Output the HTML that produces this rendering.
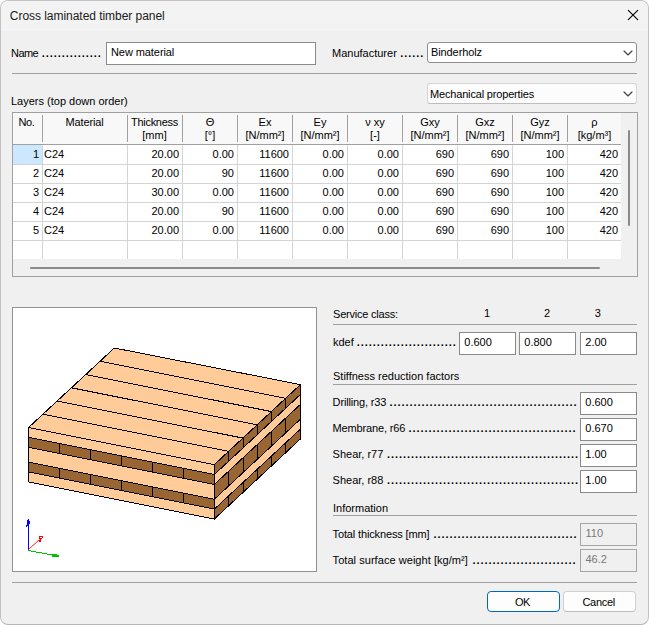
<!DOCTYPE html>
<html lang="en"><head><meta charset="utf-8"><title>Cross laminated timber panel</title>
<style>
html,body{margin:0;padding:0;background:#fff}
body{width:649px;height:625px;position:relative;overflow:hidden;font-family:"Liberation Sans",sans-serif;font-size:11px;color:#000}
.win{position:absolute;left:0;top:0;width:647px;height:623px;border:1px solid #c2c2c2;border-bottom-color:#b6b6b6;border-radius:8px;background:#f0f0f0;overflow:hidden}
.tb{position:absolute;left:0;top:0;width:647px;height:30px;background:#f3f3f3}
.t{position:absolute;white-space:nowrap;line-height:13px;height:13px}
.d{font-weight:bold}
.hl{position:absolute;height:1px}
.inp{position:absolute;border:1px solid #8a8a8a;background:#fff}
.dis{position:absolute;border:1px solid #a6a6a6;background:#f0f0f0}
.cb{position:absolute;border:1px solid #8f8f8f;border-radius:3px;background:#fff}
.cb2{position:absolute;border:1px solid #d6d6d6;border-bottom-color:#bdbdbd;border-radius:3px;background:#fcfcfc}
.btn{position:absolute;border:1px solid #d0d0d0;border-bottom-color:#bcbcbc;border-radius:4px;background:#fdfdfd}
.btn.def{border-color:#0067c0}
.grid{position:absolute;left:12px;top:112px;width:624px;height:163px;border:1px solid #a0a0a0;background:#f0f0f0}
.gw{position:absolute;left:0;top:0;width:608px;height:146px;background:#fff}
.vl{position:absolute;width:1px}
svg{position:absolute;left:0;top:0}
</style></head><body>
<div class="win">
<div class="tb"></div>

<div style="position:absolute;left:-1px;top:-1px;width:649px;height:625px">
<div class="t " style="font-size:12px;left:9.8px;top:10px;letter-spacing:-0.04px;color:#202020">Cross laminated timber panel</div>
<svg width="649" height="32" viewBox="0 0 649 32"><path d="M628.3 10.3 L637.7 19.7 M637.7 10.3 L628.3 19.7" stroke="#000" stroke-width="1.1" fill="none" stroke-linecap="round"/></svg>
<div class="t " style="left:11px;top:47px;letter-spacing:-0.55px">Name</div>
<div class="t d" style="left:41.7px;top:47px;letter-spacing:0.944px">...............</div>
<div class="inp" style="left:106px;top:42px;width:208px;height:21px"></div>
<div class="t " style="left:111px;top:46px;letter-spacing:-0.08px">New material</div>
<div class="t " style="left:332px;top:47px">Manufacturer</div>
<div class="t d" style="left:400.2px;top:47px;letter-spacing:0.944px">......</div>
<div class="cb" style="left:427px;top:42px;width:208px;height:19px"></div>
<div class="t " style="left:431px;top:46px;letter-spacing:-0.1px">Binderholz</div>
<div class="hl" style="left:12px;top:73px;width:625px;background:#a0a0a0"></div>
<div class="t " style="left:11px;top:95px">Layers (top down order)</div>
<div class="cb2" style="left:427px;top:83px;width:208px;height:19px"></div>
<div class="t " style="left:430px;top:88px;letter-spacing:-0.17px">Mechanical properties</div>
<svg width="649" height="120" viewBox="0 0 649 120"><path d="M624 51 L628 55 L632 51" stroke="#3c3c3c" stroke-width="1.15" fill="none" stroke-linecap="round"/><path d="M624 92 L628 96 L632 92" stroke="#3c3c3c" stroke-width="1.15" fill="none" stroke-linecap="round"/></svg>
<div class="grid">
<div class="gw"></div>
</div>
<div style="position:absolute;left:13px;top:113px;width:608px;height:31px;background:#f8f8f8"></div>
<div class="vl" style="left:42px;top:115px;height:27px;background:#a0a0a0"></div>
<div class="vl" style="left:42px;top:145px;height:114px;background:#d4d4d4"></div>
<div class="vl" style="left:127px;top:115px;height:27px;background:#a0a0a0"></div>
<div class="vl" style="left:127px;top:145px;height:114px;background:#d4d4d4"></div>
<div class="vl" style="left:182px;top:115px;height:27px;background:#a0a0a0"></div>
<div class="vl" style="left:182px;top:145px;height:114px;background:#d4d4d4"></div>
<div class="vl" style="left:237px;top:115px;height:27px;background:#a0a0a0"></div>
<div class="vl" style="left:237px;top:145px;height:114px;background:#d4d4d4"></div>
<div class="vl" style="left:292px;top:115px;height:27px;background:#a0a0a0"></div>
<div class="vl" style="left:292px;top:145px;height:114px;background:#d4d4d4"></div>
<div class="vl" style="left:347px;top:115px;height:27px;background:#a0a0a0"></div>
<div class="vl" style="left:347px;top:145px;height:114px;background:#d4d4d4"></div>
<div class="vl" style="left:402px;top:115px;height:27px;background:#a0a0a0"></div>
<div class="vl" style="left:402px;top:145px;height:114px;background:#d4d4d4"></div>
<div class="vl" style="left:457px;top:115px;height:27px;background:#a0a0a0"></div>
<div class="vl" style="left:457px;top:145px;height:114px;background:#d4d4d4"></div>
<div class="vl" style="left:512px;top:115px;height:27px;background:#a0a0a0"></div>
<div class="vl" style="left:512px;top:145px;height:114px;background:#d4d4d4"></div>
<div class="vl" style="left:567px;top:115px;height:27px;background:#a0a0a0"></div>
<div class="vl" style="left:567px;top:145px;height:114px;background:#d4d4d4"></div>
<div class="hl" style="left:13px;top:144px;width:608px;background:#a0a0a0"></div>
<div class="hl" style="left:13px;top:164px;width:608px;background:#d4d4d4"></div>
<div class="hl" style="left:13px;top:183px;width:608px;background:#d4d4d4"></div>
<div class="hl" style="left:13px;top:202px;width:608px;background:#d4d4d4"></div>
<div class="hl" style="left:13px;top:221px;width:608px;background:#d4d4d4"></div>
<div class="hl" style="left:13px;top:240px;width:608px;background:#d4d4d4"></div>
<div style="position:absolute;left:13px;top:145px;width:29px;height:19px;background:#cce8ff"></div>
<div class="t " style="left:-73.5px;width:200px;text-align:center;top:116px;letter-spacing:-0.3px">No.</div>
<div class="t " style="left:-15.5px;width:200px;text-align:center;top:116px;letter-spacing:-0.12px">Material</div>
<div class="t " style="left:54.5px;width:200px;text-align:center;top:116px;letter-spacing:-0.3px">Thickness</div>
<div class="t " style="left:54.5px;width:200px;text-align:center;top:129px">[mm]</div>
<div class="t " style="left:110px;width:200px;text-align:center;top:116px">Θ</div>
<div class="t " style="left:110px;width:200px;text-align:center;top:129px">[°]</div>
<div class="t " style="left:165px;width:200px;text-align:center;top:116px">Ex</div>
<div class="t " style="left:165px;width:200px;text-align:center;top:129px">[N/mm²]</div>
<div class="t " style="left:220px;width:200px;text-align:center;top:116px">Ey</div>
<div class="t " style="left:220px;width:200px;text-align:center;top:129px">[N/mm²]</div>
<div class="t " style="left:275px;width:200px;text-align:center;top:116px">ν xy</div>
<div class="t " style="left:275px;width:200px;text-align:center;top:129px">[-]</div>
<div class="t " style="left:330px;width:200px;text-align:center;top:116px">Gxy</div>
<div class="t " style="left:330px;width:200px;text-align:center;top:129px">[N/mm²]</div>
<div class="t " style="left:385px;width:200px;text-align:center;top:116px">Gxz</div>
<div class="t " style="left:385px;width:200px;text-align:center;top:129px">[N/mm²]</div>
<div class="t " style="left:440px;width:200px;text-align:center;top:116px">Gyz</div>
<div class="t " style="left:440px;width:200px;text-align:center;top:129px">[N/mm²]</div>
<div class="t " style="left:494.5px;width:200px;text-align:center;top:116px">ρ</div>
<div class="t " style="left:494.5px;width:200px;text-align:center;top:129px">[kg/m³]</div>
<div class="t " style="right:610px;text-align:right;top:148px">1</div>
<div class="t " style="left:44px;top:148px">C24</div>
<div class="t " style="right:470px;text-align:right;top:148px">20.00</div>
<div class="t " style="right:415px;text-align:right;top:148px">0.00</div>
<div class="t " style="right:360px;text-align:right;top:148px">11600</div>
<div class="t " style="right:305px;text-align:right;top:148px">0.00</div>
<div class="t " style="right:250px;text-align:right;top:148px">0.00</div>
<div class="t " style="right:195px;text-align:right;top:148px">690</div>
<div class="t " style="right:140px;text-align:right;top:148px">690</div>
<div class="t " style="right:85px;text-align:right;top:148px">100</div>
<div class="t " style="right:31px;text-align:right;top:148px">420</div>
<div class="t " style="right:610px;text-align:right;top:167px">2</div>
<div class="t " style="left:44px;top:167px">C24</div>
<div class="t " style="right:470px;text-align:right;top:167px">20.00</div>
<div class="t " style="right:415px;text-align:right;top:167px">90</div>
<div class="t " style="right:360px;text-align:right;top:167px">11600</div>
<div class="t " style="right:305px;text-align:right;top:167px">0.00</div>
<div class="t " style="right:250px;text-align:right;top:167px">0.00</div>
<div class="t " style="right:195px;text-align:right;top:167px">690</div>
<div class="t " style="right:140px;text-align:right;top:167px">690</div>
<div class="t " style="right:85px;text-align:right;top:167px">100</div>
<div class="t " style="right:31px;text-align:right;top:167px">420</div>
<div class="t " style="right:610px;text-align:right;top:186px">3</div>
<div class="t " style="left:44px;top:186px">C24</div>
<div class="t " style="right:470px;text-align:right;top:186px">30.00</div>
<div class="t " style="right:415px;text-align:right;top:186px">0.00</div>
<div class="t " style="right:360px;text-align:right;top:186px">11600</div>
<div class="t " style="right:305px;text-align:right;top:186px">0.00</div>
<div class="t " style="right:250px;text-align:right;top:186px">0.00</div>
<div class="t " style="right:195px;text-align:right;top:186px">690</div>
<div class="t " style="right:140px;text-align:right;top:186px">690</div>
<div class="t " style="right:85px;text-align:right;top:186px">100</div>
<div class="t " style="right:31px;text-align:right;top:186px">420</div>
<div class="t " style="right:610px;text-align:right;top:205px">4</div>
<div class="t " style="left:44px;top:205px">C24</div>
<div class="t " style="right:470px;text-align:right;top:205px">20.00</div>
<div class="t " style="right:415px;text-align:right;top:205px">90</div>
<div class="t " style="right:360px;text-align:right;top:205px">11600</div>
<div class="t " style="right:305px;text-align:right;top:205px">0.00</div>
<div class="t " style="right:250px;text-align:right;top:205px">0.00</div>
<div class="t " style="right:195px;text-align:right;top:205px">690</div>
<div class="t " style="right:140px;text-align:right;top:205px">690</div>
<div class="t " style="right:85px;text-align:right;top:205px">100</div>
<div class="t " style="right:31px;text-align:right;top:205px">420</div>
<div class="t " style="right:610px;text-align:right;top:224px">5</div>
<div class="t " style="left:44px;top:224px">C24</div>
<div class="t " style="right:470px;text-align:right;top:224px">20.00</div>
<div class="t " style="right:415px;text-align:right;top:224px">0.00</div>
<div class="t " style="right:360px;text-align:right;top:224px">11600</div>
<div class="t " style="right:305px;text-align:right;top:224px">0.00</div>
<div class="t " style="right:250px;text-align:right;top:224px">0.00</div>
<div class="t " style="right:195px;text-align:right;top:224px">690</div>
<div class="t " style="right:140px;text-align:right;top:224px">690</div>
<div class="t " style="right:85px;text-align:right;top:224px">100</div>
<div class="t " style="right:31px;text-align:right;top:224px">420</div>
<div style="position:absolute;left:30px;top:267px;width:570px;height:2px;border-radius:1px;background:#8a8a8a"></div>
<div style="position:absolute;left:628px;top:130px;width:2px;height:96px;border-radius:1px;background:#8a8a8a"></div>
<div style="position:absolute;left:12px;top:307px;width:303px;height:263px;border:1px solid #929292;background:#fff"></div>
<svg width="649" height="625" viewBox="0 0 649 625" shape-rendering="crispEdges"><polygon points="114.3,348.0 300.4,384.6 214.4,464.6 28.6,427.5" fill="#ffcc99" stroke="#000" stroke-width="1"/><line x1="42.9" y1="414.2" x2="228.7" y2="451.4" stroke="#000" stroke-width="1"/><line x1="57.2" y1="401.0" x2="243.0" y2="438.1" stroke="#000" stroke-width="1"/><line x1="71.4" y1="387.8" x2="257.2" y2="424.9" stroke="#000" stroke-width="1"/><line x1="85.7" y1="374.5" x2="271.5" y2="411.6" stroke="#000" stroke-width="1"/><line x1="100.0" y1="361.2" x2="285.8" y2="398.4" stroke="#000" stroke-width="1"/><polygon points="28.6,427.5 214.4,464.6 214.4,474.5 28.6,437.4" fill="#ffcc99" stroke="#000" stroke-width="1"/><polygon points="214.4,464.6 300.4,384.6 300.4,394.5 214.4,474.5" fill="#996633" stroke="#000" stroke-width="1"/><line x1="228.7" y1="451.4" x2="228.7" y2="461.2" stroke="#000" stroke-width="1"/><line x1="243.0" y1="438.1" x2="243.0" y2="448.0" stroke="#000" stroke-width="1"/><line x1="257.2" y1="424.9" x2="257.2" y2="434.7" stroke="#000" stroke-width="1"/><line x1="271.5" y1="411.6" x2="271.5" y2="421.5" stroke="#000" stroke-width="1"/><line x1="285.8" y1="398.4" x2="285.8" y2="408.2" stroke="#000" stroke-width="1"/><polygon points="28.6,437.4 214.4,474.5 214.4,484.4 28.6,447.3" fill="#996633" stroke="#000" stroke-width="1"/><line x1="59.6" y1="443.6" x2="59.6" y2="453.5" stroke="#000" stroke-width="1"/><line x1="90.5" y1="449.8" x2="90.5" y2="459.6" stroke="#000" stroke-width="1"/><line x1="121.5" y1="455.9" x2="121.5" y2="465.8" stroke="#000" stroke-width="1"/><line x1="152.5" y1="462.1" x2="152.5" y2="472.0" stroke="#000" stroke-width="1"/><line x1="183.4" y1="468.3" x2="183.4" y2="478.2" stroke="#000" stroke-width="1"/><polygon points="214.4,474.5 300.4,394.5 300.4,404.4 214.4,484.4" fill="#ffcc99" stroke="#000" stroke-width="1"/><polygon points="28.6,447.3 214.4,484.4 214.4,499.2 28.6,462.1" fill="#ffcc99" stroke="#000" stroke-width="1"/><polygon points="214.4,484.4 300.4,404.4 300.4,419.2 214.4,499.2" fill="#996633" stroke="#000" stroke-width="1"/><line x1="228.7" y1="471.1" x2="228.7" y2="486.0" stroke="#000" stroke-width="1"/><line x1="243.0" y1="457.9" x2="243.0" y2="472.7" stroke="#000" stroke-width="1"/><line x1="257.2" y1="444.6" x2="257.2" y2="459.5" stroke="#000" stroke-width="1"/><line x1="271.5" y1="431.4" x2="271.5" y2="446.2" stroke="#000" stroke-width="1"/><line x1="285.8" y1="418.1" x2="285.8" y2="433.0" stroke="#000" stroke-width="1"/><polygon points="28.6,462.1 214.4,499.2 214.4,509.1 28.6,472.0" fill="#996633" stroke="#000" stroke-width="1"/><line x1="59.6" y1="468.3" x2="59.6" y2="478.2" stroke="#000" stroke-width="1"/><line x1="90.5" y1="474.5" x2="90.5" y2="484.4" stroke="#000" stroke-width="1"/><line x1="121.5" y1="480.7" x2="121.5" y2="490.6" stroke="#000" stroke-width="1"/><line x1="152.5" y1="486.9" x2="152.5" y2="496.7" stroke="#000" stroke-width="1"/><line x1="183.4" y1="493.0" x2="183.4" y2="502.9" stroke="#000" stroke-width="1"/><polygon points="214.4,499.2 300.4,419.2 300.4,429.1 214.4,509.1" fill="#ffcc99" stroke="#000" stroke-width="1"/><polygon points="28.6,472.0 214.4,509.1 214.4,519.0 28.6,481.9" fill="#ffcc99" stroke="#000" stroke-width="1"/><polygon points="214.4,509.1 300.4,429.1 300.4,439.0 214.4,519.0" fill="#996633" stroke="#000" stroke-width="1"/><line x1="228.7" y1="495.9" x2="228.7" y2="505.8" stroke="#000" stroke-width="1"/><line x1="243.0" y1="482.6" x2="243.0" y2="492.5" stroke="#000" stroke-width="1"/><line x1="257.2" y1="469.4" x2="257.2" y2="479.2" stroke="#000" stroke-width="1"/><line x1="271.5" y1="456.1" x2="271.5" y2="466.0" stroke="#000" stroke-width="1"/><line x1="285.8" y1="442.9" x2="285.8" y2="452.8" stroke="#000" stroke-width="1"/><g stroke="none"><path fill="#0000ff" d="M28 519h1v31h-1z M27 520h1v6h-1z M29 521h1v3h-1z M26 525h1v2h-1z"/><path fill="#ff0000" d="M39 536h4v1h-4z M39 537h1v2h-1z M42 537h1v1h-1z M40 538h2v1h-2z M40 539h1v1h-1z M39 540h2v2h-2z"/><path fill="#00c000" d="M51.5 555.5 L55 553.5 L56.5 554.5 L59 555 L59 557 L51.5 556.5Z"/></g><g fill="none" stroke-width="1"><path d="M28.5 549.5 L39.5 539.5" stroke="#ff0000" shape-rendering="auto" stroke-width="0.9"/><path d="M28 550.5 L58.5 556" stroke="#00c000"/></g></svg>
<div class="t " style="left:333px;top:308px;letter-spacing:-0.21px">Service class:</div>
<div class="t " style="left:387px;width:200px;text-align:center;top:307px">1</div>
<div class="t " style="left:447px;width:200px;text-align:center;top:307px">2</div>
<div class="t " style="left:497.79999999999995px;width:200px;text-align:center;top:307px">3</div>
<div class="hl" style="left:333px;top:324px;width:304px;background:#a0a0a0"></div>
<div class="t " style="left:333px;top:336px">kdef</div>
<div class="t d" style="left:356.8px;top:336px;letter-spacing:0.944px">.........................</div>
<div class="inp" style="left:459px;top:332px;width:55px;height:21px"></div>
<div class="t " style="left:464.3px;top:336px">0.600</div>
<div class="inp" style="left:519px;top:332px;width:55px;height:21px"></div>
<div class="t " style="left:524.3px;top:336px">0.800</div>
<div class="inp" style="left:580px;top:332px;width:55px;height:21px"></div>
<div class="t " style="left:585.3px;top:336px">2.00</div>
<div class="t " style="left:333px;top:370px">Stiffness reduction factors</div>
<div class="hl" style="left:333px;top:384px;width:304px;background:#a0a0a0"></div>
<div class="t " style="left:332.6px;top:396px;letter-spacing:-0.15px">Drilling, r33</div>
<div class="t d" style="left:389.4px;top:396px;letter-spacing:0.944px">...............................................</div>
<div class="inp" style="left:580px;top:392px;width:55px;height:21px"></div>
<div class="t " style="left:585.3px;top:396px">0.600</div>
<div class="t " style="left:332.6px;top:422px;letter-spacing:-0.15px">Membrane, r66</div>
<div class="t d" style="left:408.5px;top:422px;letter-spacing:0.944px">..........................................</div>
<div class="inp" style="left:580px;top:418px;width:55px;height:21px"></div>
<div class="t " style="left:585.3px;top:422px">0.670</div>
<div class="t " style="left:332.6px;top:448px">Shear, r77</div>
<div class="t d" style="left:387px;top:448px;letter-spacing:0.944px">................................................</div>
<div class="inp" style="left:580px;top:444px;width:55px;height:21px"></div>
<div class="t " style="left:585.3px;top:448px">1.00</div>
<div class="t " style="left:332.6px;top:474px">Shear, r88</div>
<div class="t d" style="left:387px;top:474px;letter-spacing:0.944px">................................................</div>
<div class="inp" style="left:580px;top:470px;width:55px;height:21px"></div>
<div class="t " style="left:585.3px;top:474px">1.00</div>
<div class="t " style="left:333px;top:502px">Information</div>
<div class="hl" style="left:333px;top:515px;width:304px;background:#a0a0a0"></div>
<div class="t " style="left:332.6px;top:528px;letter-spacing:-0.14px">Total thickness [mm]</div>
<div class="t d" style="left:433.4px;top:528px;letter-spacing:0.944px">....................................</div>
<div class="dis" style="left:580px;top:523px;width:55px;height:21px"></div>
<div class="t " style="left:585.5px;top:527px;color:#787878">110</div>
<div class="t " style="left:332.6px;top:554px;letter-spacing:0.05px">Total surface weight [kg/m²]</div>
<div class="t d" style="left:472.5px;top:554px;letter-spacing:0.944px">..........................</div>
<div class="dis" style="left:580px;top:549px;width:55px;height:21px"></div>
<div class="t " style="left:585.5px;top:553px;color:#787878">46.2</div>
<div class="hl" style="left:12px;top:582px;width:625px;background:#a0a0a0"></div>
<div class="btn def" style="left:487px;top:591px;width:71px;height:19px"></div>
<div class="t " style="left:422.5px;width:200px;text-align:center;top:596px;letter-spacing:-0.4px">OK</div>
<div class="btn" style="left:563px;top:591px;width:71px;height:19px"></div>
<div class="t " style="left:498.70000000000005px;width:200px;text-align:center;top:596px;letter-spacing:-0.3px">Cancel</div>
</div></div></body></html>
